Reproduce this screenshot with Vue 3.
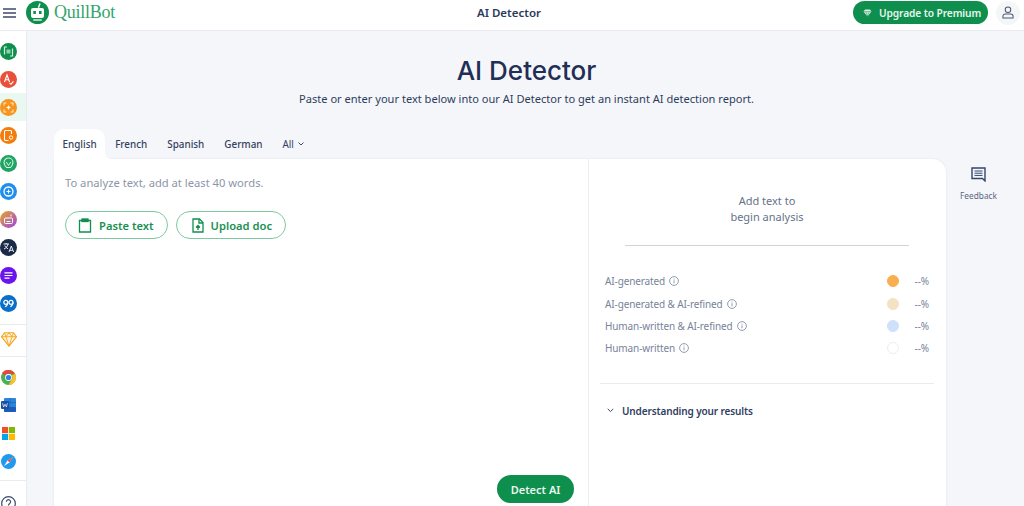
<script setup>
const rows = [
  { label: 'AI-generated', color: '#f9ae4f', border: '#f9ae4f' },
  { label: 'AI-generated & AI-refined', color: '#f5e1c4', border: '#f5e1c4' },
  { label: 'Human-written & AI-refined', color: '#cfe0fa', border: '#cfe0fa' },
  { label: 'Human-written', color: '#ffffff', border: '#eceef1' },
]
const tabs = ['French', 'Spanish', 'German']
</script>

<template>
  <div class="page">
    <header class="top">
      <div class="brand">
        <svg class="burger" width="13" height="10" viewBox="0 0 13 10"><path d="M0 1h13M0 5h13M0 9h13" stroke="#3d4a6b" stroke-width="1.400"/></svg>
        <svg class="logo" width="23" height="23" viewBox="0 0 23 23">
          <circle cx="11.500" cy="11.500" r="11.500" fill="#0f8f4d"/>
          <path d="M14 2.500l-1.600 4.200" stroke="#fff" stroke-width="1.400"/>
          <rect x="5" y="7" width="13" height="10" rx="2" fill="#fff"/>
          <rect x="7.300" y="10" width="2.600" height="3" fill="#0f8f4d"/>
          <rect x="13" y="10" width="2.600" height="3" fill="#0f8f4d"/>
          <rect x="7" y="18" width="9" height="2" rx="1" fill="#a5d8bc"/>
        </svg>
        <span class="word">QuillBot</span>
      </div>
      <div class="title">AI Detector</div>
      <div class="right">
        <button class="premium">
          <svg width="9" height="8" viewBox="0 0 11 10"><path d="M2.500 .5h6l2 2.700-5 6.300-5-6.300z" fill="#d4efdf"/><path d="M.8 3.300h9.400M3.500 3.300l2 5.800 2-5.800" stroke="#0f8f4d" stroke-width=".6" fill="none"/></svg>
          Upgrade to Premium
        </button>
        <span class="avatar">
          <svg width="12" height="13" viewBox="0 0 13 14" fill="none" stroke="#4b5873" stroke-width="1.100"><circle cx="6.500" cy="4" r="3"/><path d="M1 13v-2a2.500 2.500 0 0 1 2.500-2.500h6A2.500 2.500 0 0 1 12 11v2z"/></svg>
        </span>
      </div>
    </header>

    <div class="body">
      <nav class="side">
        <div class="group">
          <div class="item"><svg width="17" height="17" viewBox="0 0 17 17"><circle cx="8.500" cy="8.500" r="8.500" fill="#0f8f4d"/><path d="M7 4H4.500v7.500M10 13h2.500V5.500" fill="none" stroke="#cfeedd" stroke-width="1.200"/><path d="M6.500 6.500h4v4h-4z" fill="#8fd3ae"/></svg></div>
          <div class="item"><svg width="17" height="17" viewBox="0 0 17 17"><circle cx="8.500" cy="8.500" r="8.500" fill="#e8503a"/><path d="M4.500 11l2.500-7 2.500 7M5.400 8.800h3.400M9.500 12l1.500 1.300 2.400-3" fill="none" stroke="#fff" stroke-width="1.100"/></svg></div>
          <div class="item active"><svg width="17" height="17" viewBox="0 0 17 17"><circle cx="8.500" cy="8.500" r="8.500" fill="#f7941d"/><path d="M4 6.500V4h2.500M10.500 4H13v2.500M13 10.500V13h-2.500M6.500 13H4v-2.500" fill="none" stroke="#ffe6c4" stroke-width="1.100"/><path d="M8.500 6l.8 1.700 1.700.8-1.700.8-.8 1.700-.8-1.700L6 8.500l1.700-.8z" fill="#fff"/></svg></div>
          <div class="item"><svg width="17" height="17" viewBox="0 0 17 17"><circle cx="8.500" cy="8.500" r="8.500" fill="#f57c0a"/><path d="M11.500 7V4.500a1 1 0 0 0-1-1h-5a1 1 0 0 0-1 1v8a1 1 0 0 0 1 1h3" fill="none" stroke="#fff" stroke-width="1.100"/><circle cx="11" cy="10.500" r="1.700" fill="none" stroke="#fff"/></svg></div>
          <div class="item"><svg width="17" height="17" viewBox="0 0 17 17"><circle cx="8.500" cy="8.500" r="8.500" fill="#1fa463"/><path d="M4 7.500a4.500 4.500 0 1 1 9 0c0 2-1.200 3.500-2.500 5h-4C5.200 11 4 9.500 4 7.500z" fill="none" stroke="#d4f3e2" stroke-width="1.100"/><path d="M6.300 7l2.200 3.500L10.700 7" fill="none" stroke="#d4f3e2"/></svg></div>
          <div class="item"><svg width="17" height="17" viewBox="0 0 17 17"><circle cx="8.500" cy="8.500" r="8.500" fill="#1e8fee"/><circle cx="8.500" cy="8.500" r="4.500" fill="#1e8fee" stroke="#fff" stroke-width="1.300"/><path d="M6.500 8.500h4M8.500 6.500v4" stroke="#fff"/></svg></div>
          <div class="item"><svg width="17" height="17" viewBox="0 0 17 17"><defs><linearGradient id="gr" x1="0" y1="0" x2="1" y2="1"><stop offset="0" stop-color="#e9a81f"/><stop offset="1" stop-color="#9a42e8"/></linearGradient></defs><circle cx="8.500" cy="8.500" r="8.500" fill="url(#gr)"/><rect x="4.500" y="7" width="8" height="5.500" rx="1" fill="none" stroke="#fff"/><path d="M6.500 10.500h4M11 3.500v2" stroke="#fff"/></svg></div>
          <div class="item"><svg width="17" height="17" viewBox="0 0 17 17"><circle cx="8.500" cy="8.500" r="8.500" fill="#1c2a4a"/><path d="M3.500 5h5.500M6.200 4v1M8 5c-.5 2.500-2 4-4 5M4.800 6.500c.8 1.700 2 2.700 3.200 3.300M9 13l2.300-6 2.300 6M9.800 11.300h3" fill="none" stroke="#fff" stroke-width=".9"/></svg></div>
          <div class="item"><svg width="17" height="17" viewBox="0 0 17 17"><circle cx="8.500" cy="8.500" r="8.500" fill="#6a14ee"/><path d="M4.500 5.800h8M4.500 8.500h8M4.500 11.200h5" stroke="#fff" stroke-width="1.200"/></svg></div>
          <div class="item"><svg width="17" height="17" viewBox="0 0 17 17"><circle cx="8.500" cy="8.500" r="8.500" fill="#0a6fc9"/><circle cx="5.800" cy="7.300" r="2" fill="none" stroke="#fff" stroke-width="1.200"/><path d="M7.800 7.300c0 2.500-1 3.700-2.700 4.400" fill="none" stroke="#fff" stroke-width="1.200"/><circle cx="11" cy="7.300" r="2" fill="none" stroke="#fff" stroke-width="1.200"/><path d="M13 7.300c0 2.500-1 3.700-2.700 4.400" fill="none" stroke="#fff" stroke-width="1.200"/></svg></div>
        </div>
        <div class="group mid">
          <div class="item"><svg width="16" height="15" viewBox="0 0 16 15"><path d="M3.500 .7h9l3 4-7.500 9.500L.5 4.700z" fill="#fff3da" stroke="#f5a623" stroke-width="1.100"/><path d="M.5 4.700h15M5 4.700l3 9.500 3-9.500M3.500.7L5 4.700 8 .7l3 4 1.500-4" fill="none" stroke="#f5a623" stroke-width=".9"/></svg></div>
        </div>
        <div class="group mid2">
          <div class="item"><svg width="15" height="15" viewBox="0 0 15 15"><circle cx="7.500" cy="7.500" r="7.500" fill="#4caf50"/><path d="M7.500 0A7.500 7.500 0 0 1 14 3.750H7.500A3.750 3.750 0 0 0 4.200 5.600L1 3A7.500 7.500 0 0 1 7.500 0z" fill="#e8453c"/><path d="M14 3.750A7.500 7.500 0 0 1 7.500 15l3.250-5.600A3.750 3.750 0 0 0 10.700 5.500z" fill="#fbc02d"/><circle cx="7.500" cy="7.500" r="3.400" fill="#fff"/><circle cx="7.500" cy="7.500" r="2.600" fill="#2f80ed"/></svg></div>
          <div class="item"><svg width="15" height="14" viewBox="0 0 15 14"><rect x="3" y="0" width="12" height="14" rx="1" fill="#2b86d9"/><rect x="3" y="9" width="12" height="5" rx="1" fill="#1a5cb8"/><path d="M9 0v14M3 4.500h12" stroke="#185abd" stroke-width=".6"/><rect x="0" y="3" width="8" height="8" rx="1" fill="#1c4fa3"/><path d="M1.600 5.200l1 3.800 1.400-2.800L5.400 9l1-3.800" fill="none" stroke="#fff" stroke-width=".7"/></svg></div>
          <div class="item"><svg class="ms" width="13" height="13" viewBox="0 0 14 14"><rect width="6.600" height="6.600" fill="#f25022"/><rect x="7.400" width="6.600" height="6.600" fill="#7fba00"/><rect y="7.400" width="6.600" height="6.600" fill="#00a4ef"/><rect x="7.400" y="7.400" width="6.600" height="6.600" fill="#ffb900"/></svg></div>
          <div class="item"><svg width="15" height="15" viewBox="0 0 15 15"><circle cx="7.500" cy="7.500" r="7.500" fill="#1e9bf0"/><path d="M12 3L8.500 8.500 3 12l3.500-5.500z" fill="#fff"/><path d="M12 3L8.500 8.500 6.500 6.500z" fill="#f04b3e"/></svg></div>
        </div>
        <div class="help">
          <svg width="15" height="15" viewBox="0 0 15 15" fill="none" stroke="#3d4a6b" stroke-width="1.200"><circle cx="7.500" cy="7.500" r="6.800"/><path d="M5.400 5.800a2.100 2.100 0 1 1 3.300 1.700c-.8.500-1.200 1-1.200 1.900"/><path d="M7.500 10.800v1.200"/></svg>
        </div>
      </nav>

      <main class="main">
        <h1>AI Detector</h1>
        <p class="sub">Paste or enter your text below into our AI Detector to get an instant AI detection report.</p>

        <div class="workspace">
          <div class="col">
            <div class="tabs">
              <span class="tab on">English</span>
              <span v-for="t in tabs" :key="t" class="tab">{{ t }}</span>
              <span class="tab all">All
                <svg width="6" height="4" viewBox="0 0 6 4"><path d="M.5 .5L3 3l2.500-2.500" fill="none" stroke="#3d4a6b"/></svg>
              </span>
            </div>
            <div class="card">
              <section class="editor">
                <p class="hint">To analyze text, add at least 40 words.</p>
                <div class="actions">
                  <button class="outline">
                    <svg width="14" height="15" viewBox="0 0 14 15" fill="none" stroke="#0f8f4d" stroke-width="1.300"><path d="M4 2.500H1.500v11.500h11V2.500H10"/><rect x="4" y="1" width="6" height="2.500" fill="#0f8f4d"/></svg>
                    Paste text
                  </button>
                  <button class="outline upload">
                    <svg width="12" height="15" viewBox="0 0 12 15" fill="none" stroke="#0f8f4d" stroke-width="1.300"><path d="M1 1h6.500L11 4.500V14H1z"/><path d="M7 1v4h4" /><path d="M6 12V7.500M4 9.500l2-2 2 2" /></svg>
                    Upload doc
                  </button>
                </div>
                <button class="detect">Detect AI</button>
              </section>
              <aside class="panel">
                <div class="add">Add text to<br>begin analysis</div>
                <div class="rule"></div>
                <ul class="rows">
                  <li v-for="r in rows" :key="r.label" class="row">
                    <span class="lbl">{{ r.label }}
                      <svg width="10" height="10" viewBox="0 0 10 10" fill="none" stroke="#78839a" stroke-width=".8"><circle cx="5" cy="5" r="4.400"/><path d="M5 4.300v3M5 2.500v1"/></svg>
                    </span>
                    <span class="dot" :style="{ background: r.color, borderColor: r.border }"></span>
                    <span class="pct">--%</span>
                  </li>
                </ul>
                <div class="rule2"></div>
                <div class="under">
                  <svg width="7" height="5" viewBox="0 0 7 5"><path d="M.7 .8L3.500 3.600 6.300 .8" fill="none" stroke="#3d4a6b"/></svg>
                  Understanding your results
                </div>
              </aside>
            </div>
          </div>
          <div class="feedback">
            <svg width="15" height="15" viewBox="0 0 15 15"><path d="M1 1h13v13l-2.500-2.500H1z" fill="none" stroke="#34466b" stroke-width="1.400"/><path d="M3.500 4h8M3.500 6.200h8M3.500 8.400h8" stroke="#34466b"/></svg>
            <span>Feedback</span>
          </div>
        </div>
      </main>
    </div>
  </div>
</template>

<style>
html, body { margin: 0; height: 100%; overflow: hidden; }
</style>

<style scoped>
.page { width: 1024px; height: 506px; overflow: hidden; font-family: "Noto Sans", "Open Sans", sans-serif; background: #f5f6fa; display: flex; flex-direction: column; color: #2b3a5c; }
.top { height: 30px; flex: none; background: #fff; display: flex; align-items: center; justify-content: space-between; border-bottom: 1px solid #e9ebf0; position: relative; }
.brand { display: flex; align-items: center; margin-top: -5px; padding-left: 3px; }
.burger { margin-right: 10px; }
.logo { margin-right: 5px; }
.word { font-family: "Liberation Serif", serif; font-size: 18px; letter-spacing: -.25px; color: #34a56c; line-height: 23px; }
.title { position: absolute; left: 0; right: 0; text-align: center; top: 5px; font-size: 11.500px; font-weight: 600; line-height: 16px; color: #2b3a5c; pointer-events: none; transform: translateX(-3px); }
.right { display: flex; align-items: center; gap: 8px; padding-right: 4px; margin-top: -5px; }
.premium { height: 23px; width: 135px; border: 0; border-radius: 12px; background: #0f8f4d; color: #e8f6ee; font: 600 10.200px "Noto Sans", sans-serif; letter-spacing: -.1px; display: flex; align-items: center; gap: 7px; padding: 0 0 0 10px; }
.avatar { width: 24px; height: 24px; border-radius: 50%; background: #f5f6f8; display: flex; align-items: center; justify-content: center; }
.body { flex: 1; display: flex; min-height: 0; }
.side { width: 26px; flex: none; background: #fff; border-right: 1px solid #e9ebf0; display: flex; flex-direction: column; }
.group { display: flex; flex-direction: column; padding-top: 6px; padding-bottom: 7px; border-bottom: 1px solid #e9ebf0; }
.item { height: 28px; display: flex; align-items: center; }
.active { background: #e9f8f0; }
.mid { padding-top: 0; padding-bottom: 3px; padding-left: 1px; }
.mid2 { padding-top: 6px; padding-bottom: 5px; padding-left: 1px; }
.ms { margin-left: 1px; }
.help { padding: 13px 0 0 1px; }
.main { flex: 1; display: flex; flex-direction: column; align-items: stretch; min-width: 0; }
h1 { margin: 22px 0 0; padding-left: 2px; font-family: Inter, sans-serif; font-size: 26px; line-height: 36px; font-weight: 500; color: #1f2f55; text-align: center; }
.sub { margin: 2px 0 0; padding-left: 2px; font-size: 11.070px; line-height: 15px; text-align: center; color: #2e3c5c; }
.workspace { display: flex; padding: 0 0 0 27px; margin-top: 23px; }
.col { width: 892px; flex: none; }
.tabs { height: 30px; display: flex; align-items: center; }
.tab { font-size: 9.900px; font-weight: 500; color: #34425f; padding: 0 10px; height: 30px; display: flex; align-items: center; gap: 4px; }
.tab.on { background: #fff; border-radius: 10px 10px 0 0; padding: 0 8.500px; position: relative; }
.tab.on::after { content: ""; position: absolute; right: -6px; bottom: 0; width: 6px; height: 6px; background: radial-gradient(circle at 100% 0, transparent 5.500px, #fff 6px); }
.tab.all { font-weight: 400; }
.card { height: 360px; background: #fff; border-radius: 0 14px 0 0; display: flex; box-shadow: 0 0 3px rgba(40,50,80,.08); }
.editor { width: 535px; flex: none; box-sizing: border-box; border-right: 1px solid #ebedf1; padding: 16px 11px 0; position: relative; }
.hint { margin: 0; font-size: 11.200px; line-height: 15px; color: #8d96a8; }
.actions { display: flex; gap: 8px; margin-top: 21px; }
.outline { height: 28px; box-sizing: border-box; border: 1px solid #7ecaa0; background: #fff; border-radius: 14px; color: #1a8f52; font: 600 11.200px "Noto Sans", sans-serif; display: flex; align-items: center; gap: 7px; padding: 0 13px 0 12px; }
.upload { padding-left: 15px; }
.detect { position: absolute; right: 14px; top: 316px; width: 77px; height: 28px; border: 0; border-radius: 14px; background: #0f8f4d; color: #eaf7ef; font: 600 11px "Noto Sans", sans-serif; padding: 0; }
.panel { flex: 1; padding: 0 12px 0 11px; box-sizing: border-box; }
.add { text-align: center; font-size: 11px; line-height: 16px; color: #66728a; margin-top: 34px; }
.rule { height: 1px; background: #cfd3da; margin: 20px 25px 0; }
.rows { list-style: none; margin: 24px 0 0; padding: 0 5px; }
.row { height: 22.400px; display: flex; align-items: center; font-size: 10px; letter-spacing: -.12px; color: #78839a; }
.lbl { flex: 1; display: flex; align-items: center; gap: 4px; }
.dot { width: 10px; height: 10px; border-radius: 50%; border: 1px solid; margin-right: 14px; }
.pct { width: 16px; text-align: right; }
.rule2 { height: 1px; background: #e9ebef; margin-top: 23px; }
.under { display: flex; align-items: center; gap: 8px; margin-top: 20px; padding-left: 7px; font-size: 10px; letter-spacing: -.12px; font-weight: 600; color: #2f3e5f; }
.feedback { width: 65px; flex: none; display: flex; flex-direction: column; align-items: center; padding-top: 38px; gap: 8px; font-size: 8.300px; color: #5a667f; }
</style>
